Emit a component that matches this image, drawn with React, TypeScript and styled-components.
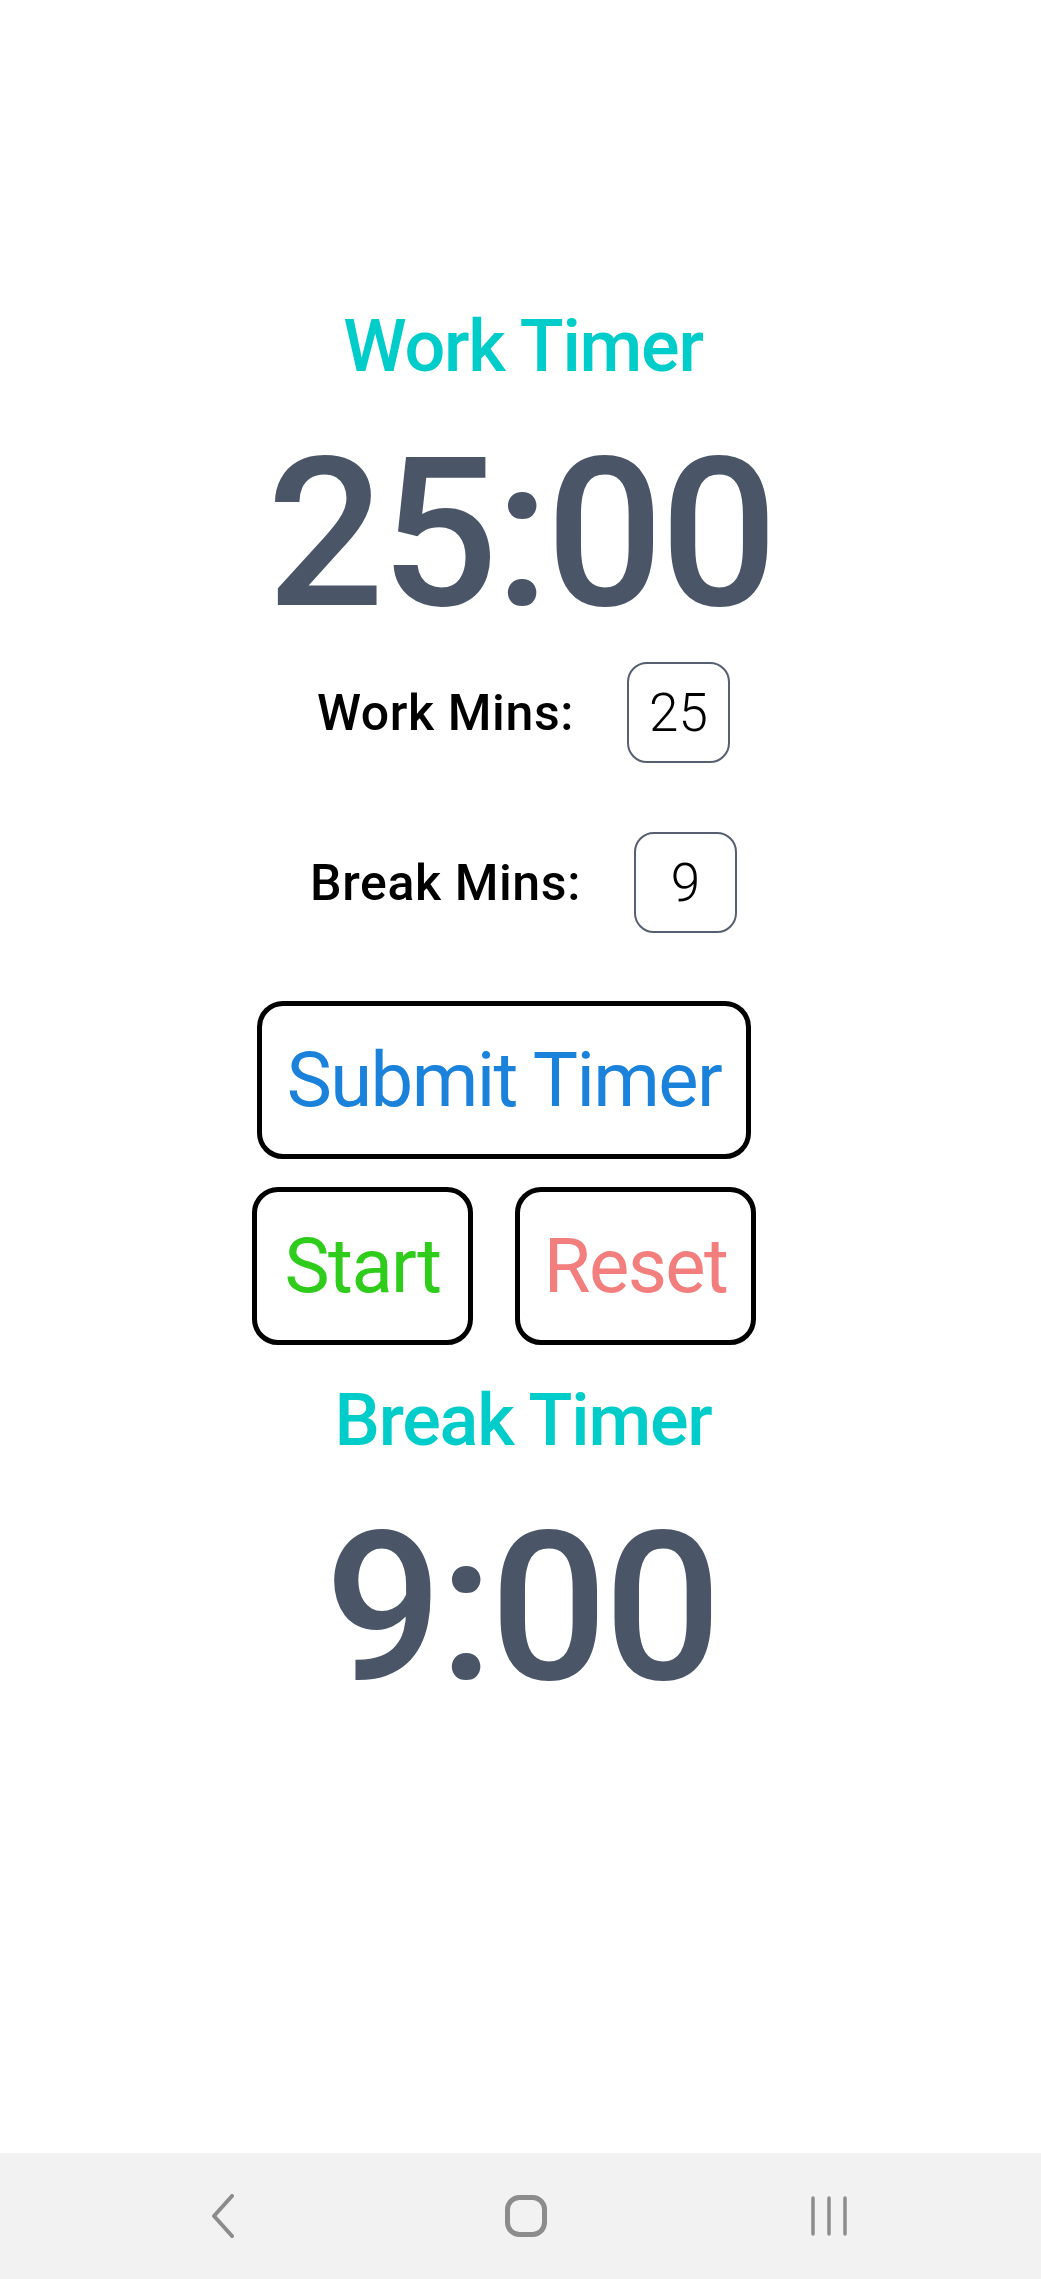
import React from "react";
import styled, { createGlobalStyle } from "styled-components";

const GlobalStyle = createGlobalStyle`
  html, body {
    margin: 0;
    padding: 0;
    background: #ffffff;
  }
  body {
    font-family: Roboto, "Noto Sans", Arial, sans-serif;
  }
`;

const Page = styled.div`
  min-height: 100vh;
  display: flex;
  flex-direction: column;
`;

const Main = styled.main`
  flex: 1;
  display: flex;
  flex-direction: column;
  align-items: center;
  padding-top: 311px;
`;

const Title = styled.h1<{ $shift: number; $gap: number }>`
  margin: ${(p) => p.$gap}px 0 0 ${(p) => p.$shift}px;
  font-family: Roboto, sans-serif;
  font-weight: 500;
  font-size: 72px;
  line-height: 72px;
  letter-spacing: -1.2px;
  color: #00cdc9;
`;

const Clock = styled.div<{ $shift: number }>`
  margin: 48px 0 0 ${(p) => p.$shift}px;
  font-family: Roboto, sans-serif;
  font-weight: 500;
  font-size: 207px;
  line-height: 207px;
  letter-spacing: -3.5px;
  color: #4a5568;
`;

const FieldRow = styled.label<{ $gap: number }>`
  margin: ${(p) => p.$gap}px 0 0 6px;
  display: flex;
  align-items: center;
  gap: 53px;
  height: 101px;
`;

const FieldLabel = styled.span`
  font-family: Roboto, sans-serif;
  font-weight: 500;
  font-size: 50px;
  line-height: 50px;
  letter-spacing: 0.6px;
  color: #000000;
`;

const NumberInput = styled.input`
  box-sizing: border-box;
  width: 103px;
  height: 101px;
  border: 2px solid #566071;
  border-radius: 20px;
  background: #ffffff;
  padding: 0;
  text-align: center;
  font-family: Roboto, sans-serif;
  font-weight: 300;
  font-size: 53px;
  color: #000000;
  outline: none;
`;

const Button = styled.button<{ $color: string; $width: number }>`
  box-sizing: border-box;
  width: ${(p) => p.$width}px;
  height: 158px;
  border: 5px solid #000000;
  border-radius: 26px;
  background: #ffffff;
  padding: 0;
  font-family: Roboto, sans-serif;
  font-weight: 400;
  font-size: 76px;
  letter-spacing: -1.6px;
  color: ${(p) => p.$color};
  cursor: pointer;
`;

const SubmitWrap = styled.div`
  margin: 68px 33px 0 0;
`;

const ButtonRow = styled.div`
  margin: 28px 33px 0 0;
  display: flex;
  gap: 42px;
`;

const NavBar = styled.nav`
  height: 126px;
  background: #f2f2f2;
  display: flex;
  justify-content: center;
  align-items: center;
  padding-left: 10px;
`;

const NavSlot = styled.div`
  width: 303px;
  display: flex;
  justify-content: center;
  align-items: center;
`;

const BackIcon = () => (
  <svg width="26" height="44" viewBox="0 0 26 44">
    <polyline
      points="22,2 4,22 22,42"
      fill="none"
      stroke="#8c8c8c"
      strokeWidth="4"
      strokeLinecap="round"
      strokeLinejoin="round"
    />
  </svg>
);

const HomeIcon = () => (
  <svg width="44" height="44" viewBox="0 0 44 44">
    <rect x="3.5" y="3.5" width="37" height="37" rx="12" fill="none" stroke="#8c8c8c" strokeWidth="5" />
  </svg>
);

const RecentsIcon = () => (
  <svg width="40" height="42" viewBox="0 0 40 42">
    <g stroke="#8c8c8c" strokeWidth="3.5" strokeLinecap="round">
      <line x1="4" y1="3" x2="4" y2="39" />
      <line x1="20" y1="3" x2="20" y2="39" />
      <line x1="36" y1="3" x2="36" y2="39" />
    </g>
  </svg>
);

export default function App() {
  return (
    <Page>
      <GlobalStyle />
      <Main>
        <Title $shift={5} $gap={0}>Work Timer</Title>
        <Clock $shift={0}>25:00</Clock>
        <FieldRow $gap={24}>
          <FieldLabel>Work Mins:</FieldLabel>
          <NumberInput type="text" defaultValue="25" />
        </FieldRow>
        <FieldRow $gap={69}>
          <FieldLabel>Break Mins:</FieldLabel>
          <NumberInput type="text" defaultValue="9" />
        </FieldRow>
        <SubmitWrap>
          <Button $color="#1a82db" $width={494}>Submit Timer</Button>
        </SubmitWrap>
        <ButtonRow>
          <Button $color="#2fcc1c" $width={221}>Start</Button>
          <Button $color="#f27e7e" $width={241}>Reset</Button>
        </ButtonRow>
        <Title $shift={5} $gap={40}>Break Timer</Title>
        <Clock $shift={2}>9:00</Clock>
      </Main>
      <NavBar>
        <NavSlot><BackIcon /></NavSlot>
        <NavSlot><HomeIcon /></NavSlot>
        <NavSlot><RecentsIcon /></NavSlot>
      </NavBar>
    </Page>
  );
}
